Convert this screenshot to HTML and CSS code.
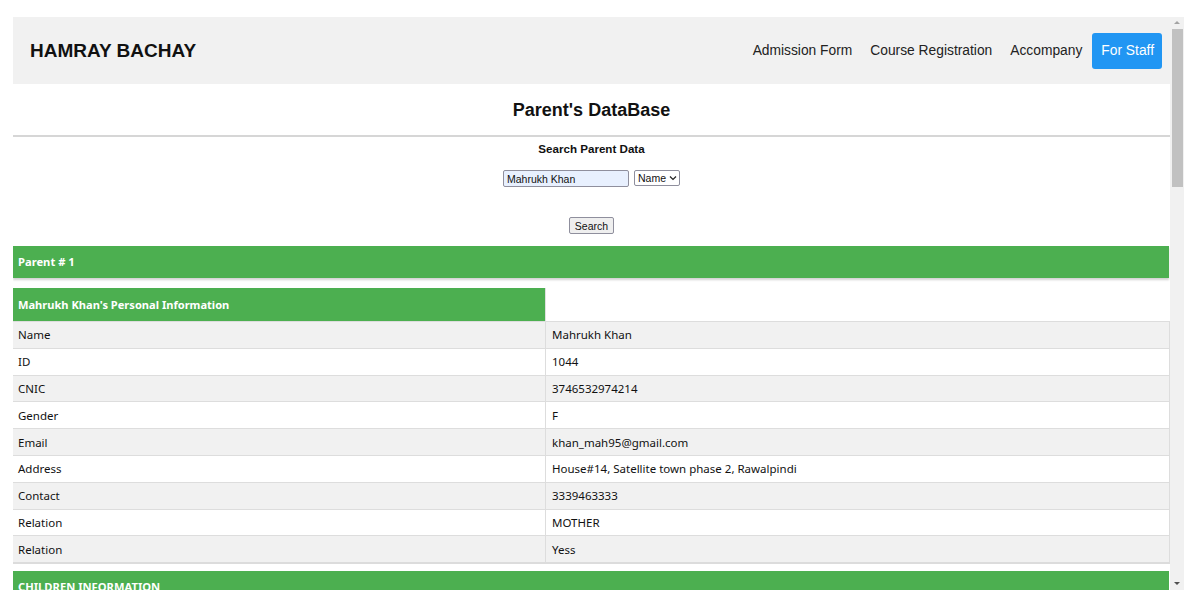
FILE: index.html
```html
<!DOCTYPE html>
<html>
<head>
<meta charset="utf-8">
<link rel="stylesheet" href="styles.css">
</head>
<body>
<div class="viewport">
  <div class="page">
    <header class="navbar">
      <div class="brand">HAMRAY BACHAY</div>
      <nav class="links">
        <a class="link">Admission Form</a>
        <a class="link">Course Registration</a>
        <a class="link">Accompany</a>
        <a class="link staff">For Staff</a>
      </nav>
    </header>
    <h1 class="title">Parent's DataBase</h1>
    <div class="rule"></div>
    <section class="search">
      <div class="search-title">Search Parent Data</div>
      <div class="search-row">
        <input class="search-input" type="text" value="Mahrukh Khan">
        <div class="select">Name <svg width="8" height="6" viewBox="0 0 8 6"><path d="M1 1.5 L4 4.5 L7 1.5" fill="none" stroke="#222" stroke-width="1.2"/></svg></div>
      </div>
      <button class="search-btn">Search</button>
    </section>
    <div class="bar parent-bar">Parent # 1</div>
    <table class="info">
      <tr class="head"><th>Mahrukh Khan's Personal Information</th><th class="blank"></th></tr>
      <tr><td>Name</td><td>Mahrukh Khan</td></tr>
      <tr><td>ID</td><td>1044</td></tr>
      <tr><td>CNIC</td><td>3746532974214</td></tr>
      <tr><td>Gender</td><td>F</td></tr>
      <tr><td>Email</td><td>khan_mah95@gmail.com</td></tr>
      <tr><td>Address</td><td>House#14, Satellite town phase 2, Rawalpindi</td></tr>
      <tr><td>Contact</td><td>3339463333</td></tr>
      <tr><td>Relation</td><td>MOTHER</td></tr>
      <tr><td>Relation</td><td>Yess</td></tr>
    </table>
    <div class="bar children-bar">CHILDREN INFORMATION</div>
  </div>
  <div class="scrollbar">
    <div class="arrow up"></div>
    <div class="thumb"></div>
    <div class="spacer"></div>
    <div class="arrow down"></div>
  </div>
</div>
</body>
</html>
```
FILE: styles.css
```css
html, body {
  margin: 0;
  padding: 0;
  background: #ffffff;
}
body {
  padding: 17px 0 0 13px;
  font-family: "Liberation Sans", Arial, sans-serif;
  color: #000;
}
.viewport {
  width: 1171px;
  height: 573px;
  display: flex;
  overflow: hidden;
}
.page {
  width: 1157px;
  flex: none;
  overflow: hidden;
}
.navbar {
  height: 67px;
  background: #f1f1f1;
  display: flex;
  align-items: center;
  justify-content: space-between;
  padding: 0 8px 0 17px;
  box-sizing: border-box;
}
.brand {
  font-weight: bold;
  font-size: 19px;
  color: #111;
  margin-top: 1px;
}
.links {
  display: flex;
  align-items: center;
}
.link {
  font-size: 13.8px;
  color: #222;
  padding: 10px 9px;
  line-height: 16px;
}
.link.staff {
  background: #2196f3;
  color: #fff;
  border-radius: 3px;
  padding: 10px 8px 10px 9px;
  margin-left: 1px;
}
.title {
  margin: 0;
  height: 51px;
  font-size: 18px;
  font-weight: bold;
  text-align: center;
  line-height: 53px;
  color: #111;
}
.rule {
  height: 2px;
  background: #d6d6d6;
}
.search {
  display: flex;
  flex-direction: column;
  align-items: center;
}
.search-title {
  font-size: 11.6px;
  font-weight: bold;
  margin-top: 5px;
  line-height: 13px;
  color: #111;
}
.search-row {
  display: flex;
  align-items: flex-start;
  margin-top: 15px;
}
.search-input {
  width: 126px;
  height: 17px;
  box-sizing: border-box;
  border: 1px solid #8f8f9d;
  border-radius: 2px;
  background: #e8f0fe;
  font-family: "Liberation Sans", Arial, sans-serif;
  font-size: 10.5px;
  padding: 0 3px;
  color: #111;
}
.select {
  width: 46px;
  height: 16px;
  box-sizing: border-box;
  border: 1px solid #8f8f9d;
  border-radius: 2px;
  margin-left: 5px;
  font-size: 10.5px;
  line-height: 14px;
  padding-left: 3px;
  display: flex;
  align-items: center;
  gap: 3px;
  color: #111;
}
.search-btn {
  margin-top: 30px;
  width: 45px;
  height: 17px;
  box-sizing: border-box;
  border: 1px solid #8f8f9d;
  border-radius: 2px;
  background: #efefef;
  font-family: "Liberation Sans", Arial, sans-serif;
  font-size: 10.5px;
  padding: 0;
  color: #111;
}
.bar {
  background: #4caf50;
  color: #fff;
  font-family: "Noto Sans", sans-serif;
  font-weight: bold;
  font-size: 11.2px;
  padding-left: 5px;
  box-sizing: border-box;
  width: 1156px;
}
.parent-bar {
  margin-top: 12px;
  height: 32px;
  line-height: 32px;
  box-shadow: 0 2px 2px rgba(0,0,0,0.18);
}
.info {
  margin-top: 10px;
  width: 1157px;
  border-collapse: collapse;
  font-family: "Noto Sans", sans-serif;
  font-size: 11.5px;
  color: #111;
  border-bottom: 2px solid #dcdcdc;
}
.info th {
  background: #4caf50;
  color: #fff;
  text-align: left;
  font-weight: bold;
  font-size: 11.1px;
  height: 33px;
  padding: 0 0 0 5px;
  width: 527px;
}
.info th.blank {
  background: #fff;
  border-left: 1px solid #e0e0e0;
  width: auto;
}
.info td {
  height: 25.8px;
  padding: 0 0 0 5px;
  border-top: 1px solid #dddddd;
}
.info td + td {
  border-left: 1px solid #dddddd;
  padding-left: 6px;
  border-right: 1px solid #dddddd;
}
.info tr:nth-child(even) td {
  background: #f1f1f1;
}
.children-bar {
  margin-top: 7px;
  height: 32px;
  line-height: 32px;
}
.scrollbar {
  width: 14px;
  flex: none;
  background: #f1f1f1;
  display: flex;
  flex-direction: column;
  align-items: center;
}
.arrow {
  width: 0;
  height: 0;
  border-left: 3px solid transparent;
  border-right: 3px solid transparent;
}
.arrow.up {
  margin-top: 4px;
  border-bottom: 3px solid #a3a3a3;
}
.arrow.down {
  margin-bottom: 5px;
  border-top: 3px solid #505050;
}
.thumb {
  margin-top: 5px;
  width: 11px;
  height: 158px;
  background: #c1c1c1;
}
.spacer {
  flex: 1;
}
```
